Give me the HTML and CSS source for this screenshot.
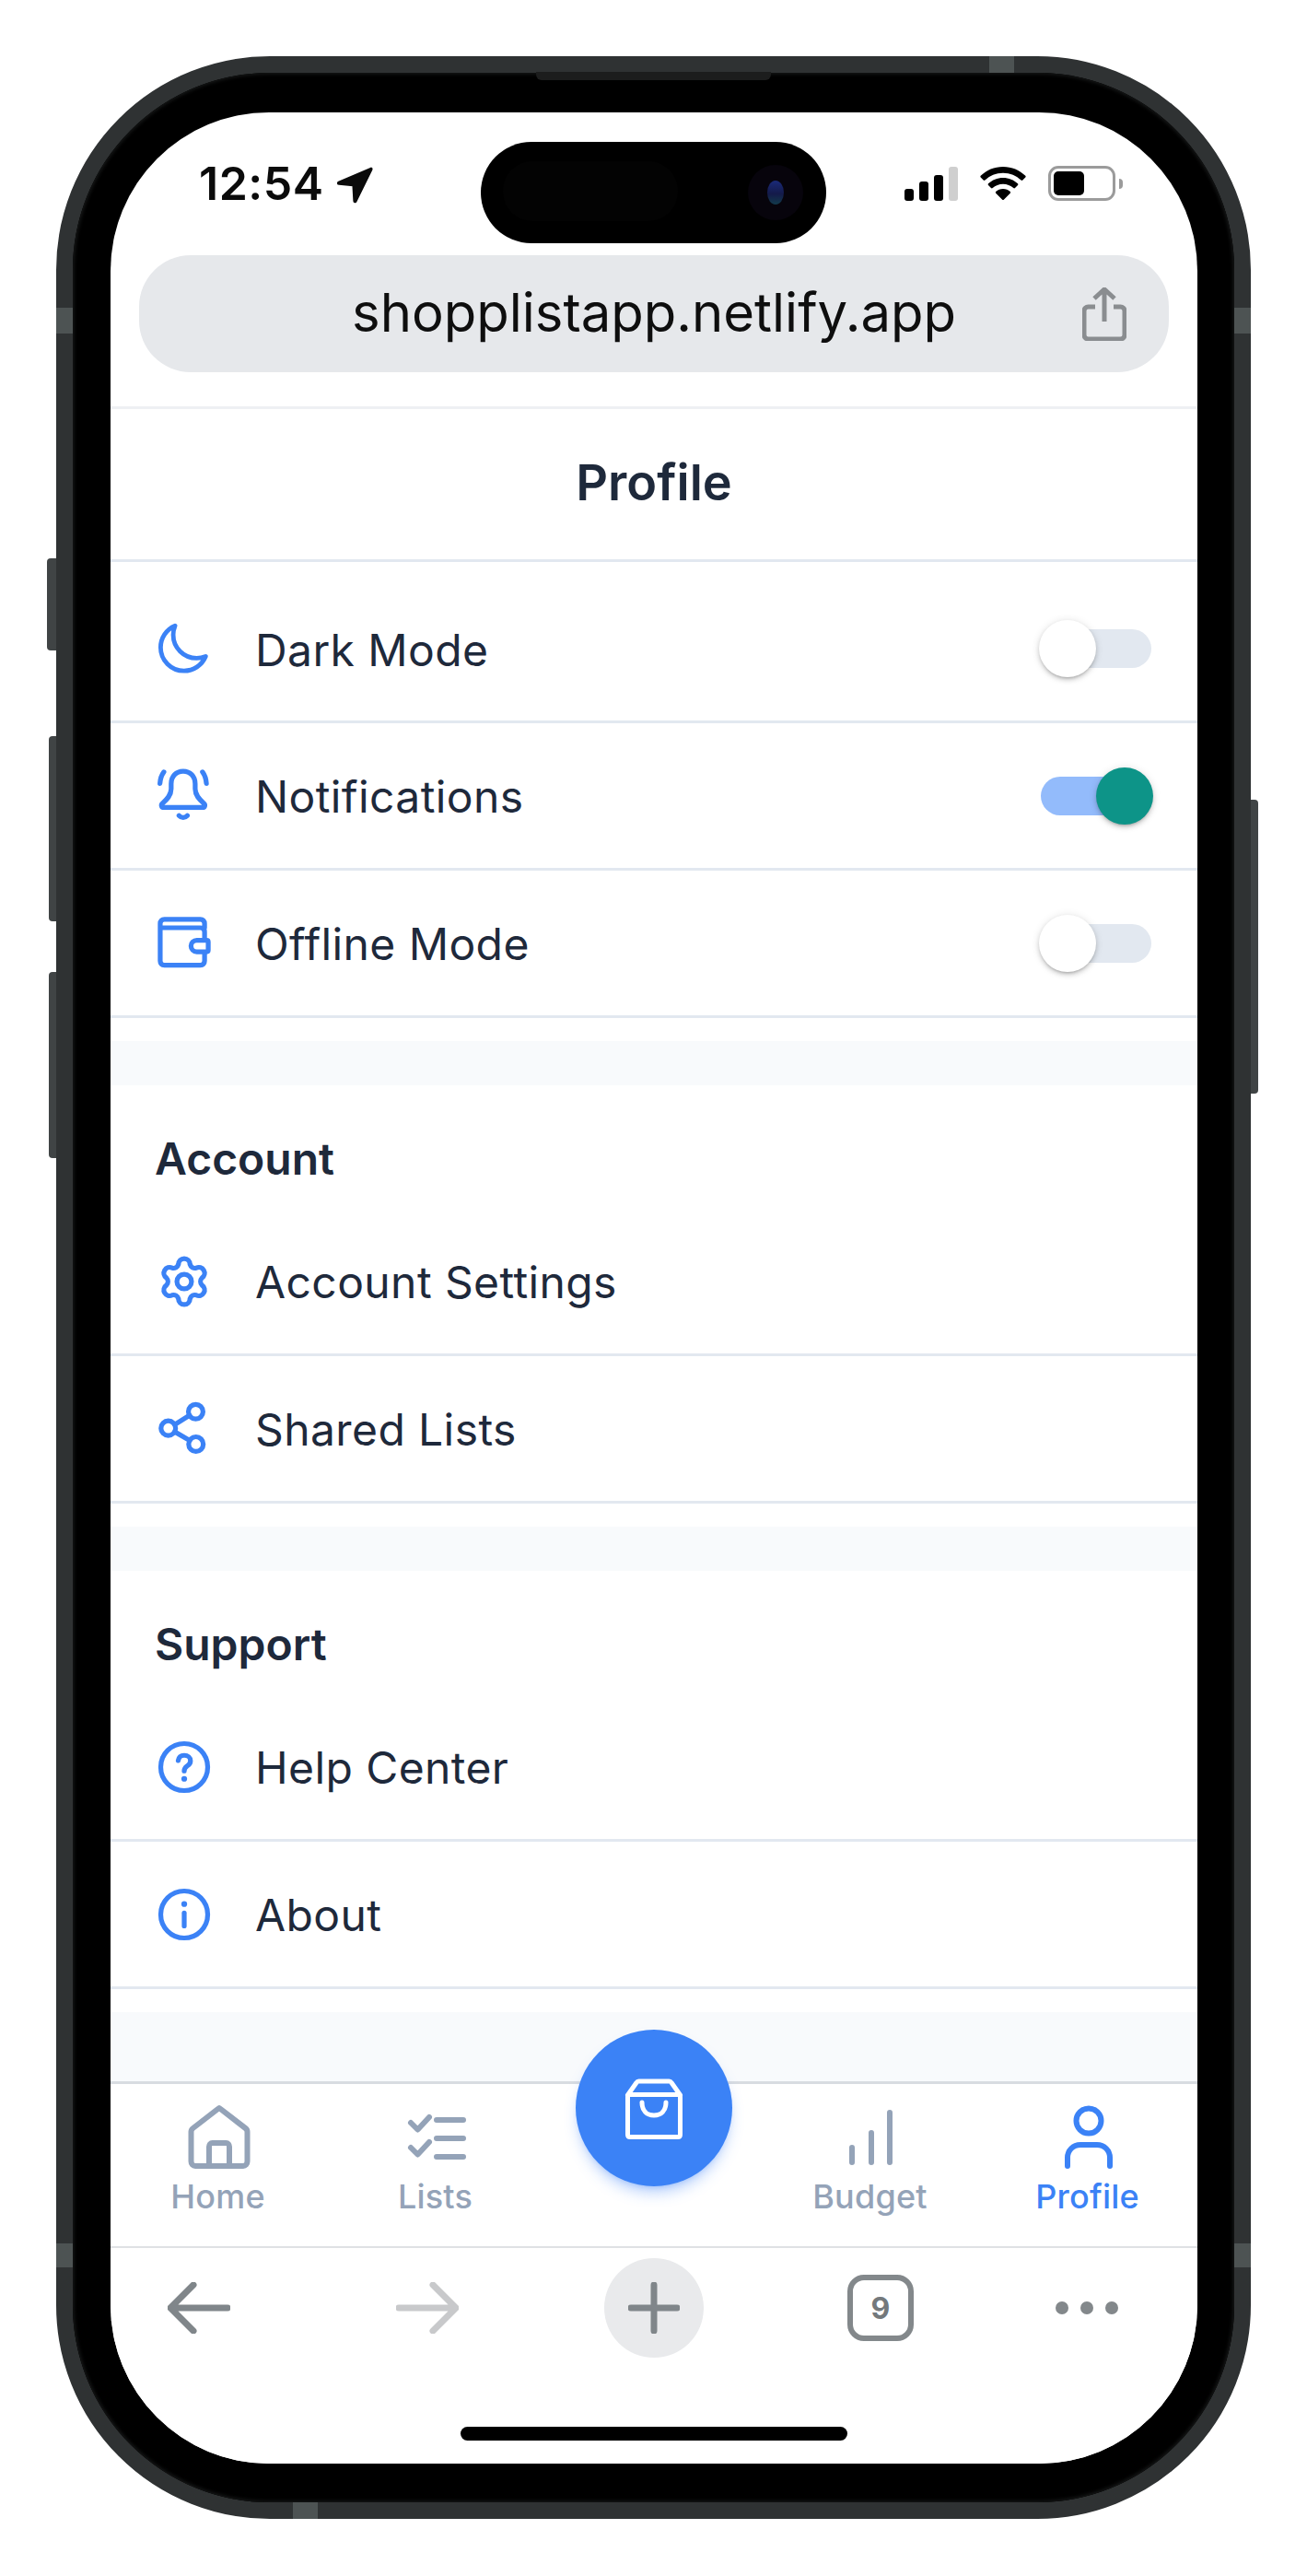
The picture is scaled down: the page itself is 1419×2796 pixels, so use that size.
FILE: index.html
```html
<!DOCTYPE html>
<html lang="en">
<head>
<meta charset="UTF-8">
<meta name="viewport" content="width=device-width, initial-scale=1.0">
<title>Profile</title>
<link rel="stylesheet" href="styles.css">
</head>
<body>
<div class="phone">
    <!-- side buttons and antenna bands -->
    <span class="btn btn-mute"></span>
    <span class="btn btn-up"></span>
    <span class="btn btn-down"></span>
    <span class="btn btn-power"></span>
    <span class="band band-lt"></span>
    <span class="band band-rt"></span>
    <span class="band band-lb"></span>
    <span class="band band-rb"></span>
    <span class="band band-top"></span>
    <span class="band band-bottom"></span>
    <span class="speaker"></span>

    <div class="bezel">
        <div class="screen">
            <div class="status-bar">
                <div class="time-group">
                    <span class="time">12:54</span>
                    <svg class="loc" viewBox="0 0 38 38"><path d="M36 1.500 2.500 15.600c-1.500.7-1.100 2.400.5 2.500l14.300 1.300 .9 15.800c.2 1.600 1.900 1.900 2.500.4L36.700 3c.5-1.300-.4-2-.7-1.500Z"/></svg>
                </div>
                <div class="island">
                    <span class="island-inner"></span>
                    <span class="camera"><span class="lens"></span></span>
                </div>
                <div class="status-icons">
                    <div class="signal">
                        <span class="bar bar1"></span>
                        <span class="bar bar2"></span>
                        <span class="bar bar3"></span>
                        <span class="bar bar4"></span>
                    </div>
                    <svg class="wifi" viewBox="0 0 50 36"><path d="M25 0C15.500 0 7 3.700.7 9.800c-.5.500-.5 1.200 0 1.700l3 3.100c.5.500 1.200.500 1.700 0C10.500 9.700 17.400 6.700 25 6.700s14.500 3 19.600 7.900c.5.500 1.200.500 1.700 0l3-3.100c.5-.5.5-1.200 0-1.700C43 3.700 34.500 0 25 0Z"/><path d="M25 12c-6.200 0-11.800 2.400-16 6.300-.5.500-.5 1.200 0 1.700l3 3.100c.5.500 1.200.500 1.700 0C16.700 20.300 20.700 18.700 25 18.700s8.300 1.600 11.300 4.400c.5.500 1.200.500 1.700 0l3-3.100c.5-.5.5-1.200 0-1.700C36.800 14.400 31.200 12 25 12Z"/><path d="M25 24c-3 0-5.700 1.100-7.800 3-.5.500-.5 1.200 0 1.700l7 7c.4.400 1.200.400 1.600 0l7-7c.5-.5.5-1.200 0-1.700C30.700 25.100 28 24 25 24Z"/></svg>
                    <div class="battery"><span class="battery-fill"></span></div>
                    <span class="battery-nub"></span>
                </div>
            </div>

            <div class="url-bar">
                <span class="url">shopplistapp.netlify.app</span>
                <svg class="url-share" viewBox="0 0 48 58"><path d="M14 21H6.500A4.500 4.500 0 0 0 2 25.500v26A4.500 4.500 0 0 0 6.500 56h35a4.500 4.500 0 0 0 4.500-4.500v-26a4.500 4.500 0 0 0-4.500-4.500H34"/><path d="M24 37V3M13 12 24 2l11 10"/></svg>
            </div>

            <div class="page">
                <div class="page-title">Profile</div>

                <div class="row row-first">
                    <svg class="icon" viewBox="0 0 24 24"><path transform="translate(.2 1.200) scale(.92)" d="M21.752 15.002A9.720 9.720 0 0 1 18 15.750c-5.385 0-9.750-4.365-9.750-9.750 0-1.330.266-2.597.748-3.752A9.753 9.753 0 0 0 3 11.250C3 16.635 7.365 21 12.750 21a9.753 9.753 0 0 0 9.002-5.998Z"/></svg>
                    <span class="row-label">Dark Mode</span>
                    <div class="toggle"><span class="knob"></span></div>
                </div>
                <div class="row">
                    <svg class="icon" viewBox="0 0 24 24"><path d="M11.600 2.500c-2.700 0-4.600 2-4.600 4.800v2c0 2.400-1.600 4-3.400 5.600-.6.600-.3 1.500.6 1.500h14.800c.9 0 1.200-.9.6-1.500-1.800-1.600-3.400-3.200-3.400-5.600v-2c0-2.800-1.900-4.800-4.600-4.800Z"/><path d="M10 19.500c.9 1 2.300 1 3.200 0M4.200 2.800c-.9 1.200-1.400 2.800-1.500 4.400M19 2.800c.9 1.200 1.400 2.800 1.500 4.400"/></svg>
                    <span class="row-label">Notifications</span>
                    <div class="toggle toggle-on"><span class="knob"></span></div>
                </div>
                <div class="row">
                    <svg class="icon" viewBox="0 0 24 24"><path d="M19.800 10.400V7.600c0-1-.6-1.600-1.600-1.600H2.800m17 9.800v2.900c0 1-.6 1.600-1.600 1.600H4.400c-1 0-1.600-.6-1.600-1.600V4.400c0-1 .6-1.600 1.600-1.600h13.800c1 0 1.600.6 1.600 1.600V6"/><path d="M16.800 10.800h3.800c.4 0 .6.200.6.600v3.200c0 .4-.2.600-.6.600h-3.800a2.200 2.200 0 0 1 0-4.400Z"/></svg>
                    <span class="row-label">Offline Mode</span>
                    <div class="toggle"><span class="knob"></span></div>
                </div>

                <div class="gap"></div>
                <div class="section-title">Account</div>
                <div class="row">
                    <svg class="icon" viewBox="0 0 24 24"><path d="M9.800 5.400A2.200 2.200 0 0 1 14.200 5.400A2 2 0 0 0 16.620 6.800A2.200 2.200 0 0 1 18.820 10.600A2 2 0 0 0 18.820 13.400A2.200 2.200 0 0 1 16.620 17.200A2 2 0 0 0 14.200 18.600A2.200 2.200 0 0 1 9.800 18.600A2 2 0 0 0 7.380 17.200A2.200 2.200 0 0 1 5.180 13.400A2 2 0 0 0 5.180 10.600A2.200 2.200 0 0 1 7.380 6.800A2 2 0 0 0 9.800 5.400Z"/><circle cx="12" cy="12" r="2.800"/></svg>
                    <span class="row-label">Account Settings</span>
                </div>
                <div class="row">
                    <svg class="icon" viewBox="0 0 24 24"><circle cx="16.400" cy="5.400" r="2.800"/><circle cx="5.900" cy="11.700" r="2.800"/><circle cx="16.500" cy="17.800" r="2.800"/><path d="m8.400 10.300 5.600-3.500M8.400 13.100l5.700 3.300"/></svg>
                    <span class="row-label">Shared Lists</span>
                </div>

                <div class="gap"></div>
                <div class="section-title">Support</div>
                <div class="row">
                    <svg class="icon" viewBox="0 0 24 24"><circle cx="12" cy="12" r="9"/><path d="M9.700 9.500c.2-1.300 1.100-2 2.300-2 1.400 0 2.400.9 2.400 2.100 0 1-.5 1.500-1.300 2-.7.5-1.100 1-1.100 1.900"/><path class="dot" d="M12 16.500h.01"/></svg>
                    <span class="row-label">Help Center</span>
                </div>
                <div class="row">
                    <svg class="icon" viewBox="0 0 24 24"><circle cx="12" cy="12" r="9"/><path d="M12 11.400v5"/><path class="dot" d="M12 8h.01"/></svg>
                    <span class="row-label">About</span>
                </div>
                <div class="gap gap-last"></div>
            </div>

            <div class="tab-bar">
                <div class="tab">
                    <svg class="tab-icon" viewBox="0 0 72 72"><path d="M36 4 7.500 26c-1.300 1-2 2.300-2 3.800V62c0 2.800 2 5 4.500 5h52c2.500 0 4.500-2.200 4.500-5V29.800c0-1.500-.7-2.800-2-3.800L36 4Z"/><path d="M25 66V46c0-2.200 1.500-4 3.500-4h15c2 0 3.500 1.800 3.500 4v20"/></svg>
                    <span class="tab-label">Home</span>
                </div>
                <div class="tab">
                    <svg class="tab-icon" viewBox="0 0 72 72"><path d="m8 20 7.500 7.500L28 14M8 47l7.500 7.500L28 41M36 17h29M36 37h29M36 57h29"/></svg>
                    <span class="tab-label">Lists</span>
                </div>
                <div class="tab"></div>
                <div class="tab">
                    <svg class="tab-icon" viewBox="0 0 72 72"><path d="M15 47v16M36 31v32M56 9v54"/></svg>
                    <span class="tab-label">Budget</span>
                </div>
                <div class="tab tab-active">
                    <svg class="tab-icon" viewBox="0 0 72 72"><circle cx="36" cy="18" r="13.500"/><path d="M13 67V58c0-8 6-14 14-14h18c8 0 14 6 14 14v9"/></svg>
                    <span class="tab-label">Profile</span>
                </div>
                <div class="fab">
                    <svg class="fab-icon" viewBox="0 0 72 72"><path d="M7.500 22 17 8.500c.6-1 1.500-1.500 2.500-1.500h33c1 0 1.900.5 2.500 1.500L64.500 22"/><path d="M7.500 24c0-1.500 1-2.500 2.500-2.500h52c1.500 0 2.500 1 2.500 2.500v41c0 1.500-1 2.500-2.500 2.500H10c-1.500 0-2.500-1-2.500-2.500V24Z"/><path d="M23 30c0 9 5 14 13 14s13-5 13-14"/></svg>
                </div>
            </div>

            <div class="browser-bar">
                <div class="browser-row">
                    <svg class="arrow" viewBox="0 0 68 56"><path d="M65 28H5M28 3 3 28l25 25"/></svg>
                    <svg class="arrow arrow-off" viewBox="0 0 68 56"><path d="M3 28h60M40 3l25 25-25 25"/></svg>
                    <div class="plus"><svg viewBox="0 0 56 56"><path d="M28 3v50M3 28h50"/></svg></div>
                    <div class="tabs-count">9</div>
                    <div class="dots"><span></span><span></span><span></span></div>
                </div>
                <div class="home-indicator"></div>
            </div>
        </div>
    </div>
</div>
</body>
</html>
```

FILE: styles.css
```css
*{
    box-sizing: border-box;
}
html, body{
    margin: 0;
    padding: 0;
    background: #fff;
    font-family: "Inter", "Liberation Sans", sans-serif;
}
body{
    width: 1419px;
    height: 2796px;
    padding-top: 61px;
    padding-left: 61px;
    overflow: hidden;
}

/* phone frame */
.phone{
    position: relative;
    width: 1297px;
    height: 2673px;
    border: 18px solid #2f3233;
    border-radius: 232px;
    background: #000;
}
.bezel{
    height: 100%;
    padding: 43px 40px 42px 41px;
    background: #000;
    border-radius: 214px;
    box-shadow: inset 0 0 4px 1px #1b1d1d;
}
.screen{
    position: relative;
    display: flex;
    flex-direction: column;
    width: 1180px;
    height: 2552px;
    background: #fff;
    border-radius: 172px;
    overflow: hidden;
}

.btn{
    position: absolute;
    background: #404445;
    border-radius: 4px 0 0 4px;
}
.btn-mute{ left: -28px; top: 527px; width: 10px; height: 100px; }
.btn-up{ left: -26px; top: 720px; width: 8px; height: 201px; }
.btn-down{ left: -26px; top: 976px; width: 8px; height: 202px; }
.btn-power{ right: -26px; top: 789px; width: 8px; height: 319px; border-radius: 0 4px 4px 0; }

.band{
    position: absolute;
    background: #4d5353;
}
.band-lt{ left: -18px; top: 255px; width: 18px; height: 28px; }
.band-rt{ right: -18px; top: 255px; width: 18px; height: 28px; }
.band-lb{ left: -18px; top: 2356px; width: 18px; height: 26px; }
.band-rb{ right: -18px; top: 2356px; width: 18px; height: 26px; }
.band-top{ left: 995px; top: -18px; width: 27px; height: 18px; }
.band-bottom{ left: 239px; bottom: -18px; width: 27px; height: 18px; }
.speaker{
    position: absolute;
    left: 503px;
    top: -1px;
    width: 255px;
    height: 9px;
    background: #1c1d1d;
    border-radius: 0 0 6px 6px;
}

/* status bar */
.status-bar{
    display: flex;
    height: 155px;
    flex-shrink: 0;
}
.time-group{
    display: flex;
    align-items: flex-start;
    width: 402px;
    padding-left: 96px;
    padding-top: 52px;
}
.time{
    font-size: 50px;
    font-weight: 600;
    line-height: 50px;
    letter-spacing: .5px;
    color: #0b0b0b;
}
.loc{
    width: 40px;
    height: 40px;
    margin-left: 14px;
    margin-top: 7px;
    fill: #0b0b0b;
    stroke: #0b0b0b;
    stroke-width: 1.500;
    stroke-linejoin: round;
}
.island{
    position: relative;
    width: 375px;
    height: 110px;
    margin-top: 32px;
    background: #000;
    border-radius: 55px;
}
.island-inner{
    position: absolute;
    left: 24px;
    top: 21px;
    width: 190px;
    height: 65px;
    background: #030303;
    border-radius: 32px;
}
.camera{
    position: absolute;
    left: 290px;
    top: 25px;
    width: 60px;
    height: 60px;
    background: #07040c;
    border-radius: 50%;
}
.lens{
    position: absolute;
    left: 21px;
    top: 17px;
    width: 18px;
    height: 26px;
    border-radius: 50%;
    background: linear-gradient(#1a2a78, #141a4a 55%, #123a4a);
}
.status-icons{
    display: flex;
    align-items: flex-start;
    margin-left: 85px;
    padding-top: 59px;
}
.signal{
    display: flex;
    align-items: flex-end;
    gap: 6px;
    width: 60px;
    height: 37px;
}
.bar{
    width: 10px;
    background: #000;
    border-radius: 3px;
}
.bar1{ height: 13px; }
.bar2{ height: 21px; }
.bar3{ height: 28px; }
.bar4{ height: 37px; background: #cfcfcf; }
.wifi{
    width: 50px;
    height: 36px;
    margin-left: 22px;
    fill: #000;
}
.battery{
    width: 73px;
    height: 38px;
    margin-left: 24px;
    margin-top: -1px;
    padding: 3px;
    border: 3px solid #9b9b9b;
    border-radius: 11px;
}
.battery-fill{
    display: block;
    width: 33px;
    height: 100%;
    background: #000;
    border-radius: 5px;
}
.battery-nub{
    width: 4px;
    height: 11px;
    margin-left: 4px;
    margin-top: 13px;
    background: #9b9b9b;
    border-radius: 0 4px 4px 0;
}

/* url bar */
.url-bar{
    position: relative;
    display: flex;
    align-items: center;
    justify-content: center;
    flex-shrink: 0;
    height: 127px;
    margin: 0 31px;
    background: #e6e8eb;
    border-radius: 56px;
}
.url{
    font-size: 58px;
    color: #0e0e0e;
    line-height: 70px;
    margin-top: -4px;
}
.url-share{
    position: absolute;
    right: 46px;
    top: 35px;
    width: 48px;
    height: 58px;
    fill: none;
    stroke: #8a8d90;
    stroke-width: 5;
}

/* page */
.page{
    flex: 1;
    margin-top: 37px;
    border-top: 3px solid #eef0f3;
    overflow: hidden;
}
.page-title{
    height: 166px;
    line-height: 160px;
    text-align: center;
    font-size: 54px;
    font-weight: 600;
    color: #1e293b;
    border-bottom: 3px solid #e2e8f0;
}
.row{
    display: flex;
    align-items: center;
    height: 160px;
    padding: 0 48px 0 46px;
    border-bottom: 3px solid #e2e8f0;
}
.row-first{
    height: 175px;
    padding-top: 16px;
}
.icon{
    flex-shrink: 0;
    width: 68px;
    height: 68px;
    fill: none;
    stroke: #3b82f6;
    stroke-width: 1.850;
    stroke-linecap: round;
    stroke-linejoin: round;
}
.icon .dot{
    stroke-width: 2.200;
}
.row-label{
    flex: 1;
    margin-left: 43px;
    margin-top: 2px;
    font-size: 48px;
    letter-spacing: .4px;
    color: #1e293b;
}
.toggle{
    position: relative;
    width: 120px;
    height: 42px;
    margin-right: 2px;
    background: #e2e8f0;
    border-radius: 21px;
}
.knob{
    position: absolute;
    left: -2px;
    top: -10px;
    width: 62px;
    height: 62px;
    background: #fff;
    border-radius: 50%;
    box-shadow: 0 3px 3px -2px rgba(0,0,0,.2), 0 3px 5px rgba(0,0,0,.14), 0 1px 10px rgba(0,0,0,.12);
}
.toggle-on{
    background: #93bbfb;
}
.toggle-on .knob{
    left: 60px;
    background: #0d9488;
}
.gap{
    height: 48px;
    margin-top: 25px;
    background: #f8fafc;
}
.gap-last{
    height: 90px;
}
.section-title{
    height: 134px;
    padding: 44px 48px 0;
    font-size: 48px;
    line-height: 72px;
    font-weight: 600;
    color: #1e293b;
}

/* bottom tabs */
.tab-bar{
    position: relative;
    display: flex;
    flex-shrink: 0;
    height: 179px;
    background: #fff;
    border-top: 3px solid #d8dce1;
}
.tab{
    flex: 1;
    display: flex;
    flex-direction: column;
    align-items: center;
    padding-top: 22px;
    color: #94a3b8;
}
.tab-active{
    color: #3b82f6;
}
.tab-icon{
    width: 72px;
    height: 72px;
    fill: none;
    stroke: currentColor;
    stroke-width: 6;
    stroke-linecap: round;
    stroke-linejoin: round;
}
.tab-label{
    margin-top: 6px;
    margin-right: 3px;
    font-size: 36px;
    line-height: 44px;
    font-weight: 500;
    letter-spacing: .2px;
}
.fab{
    position: absolute;
    left: 505px;
    top: -59px;
    display: flex;
    align-items: center;
    justify-content: center;
    width: 170px;
    height: 170px;
    background: #3b82f6;
    border-radius: 50%;
    box-shadow: 0 10px 15px -3px rgba(59,130,246,.35), 0 4px 6px -4px rgba(59,130,246,.35);
}
.fab-icon{
    width: 72px;
    height: 72px;
    fill: none;
    stroke: #fff;
    stroke-width: 5;
    stroke-linecap: round;
    stroke-linejoin: round;
}

/* safari toolbar */
.browser-bar{
    position: relative;
    flex-shrink: 0;
    height: 236px;
    background: #fff;
    border-top: 2px solid #dfe1e4;
}
.browser-row{
    display: flex;
    align-items: center;
    height: 130px;
    padding-left: 62px;
}
.arrow{
    width: 68px;
    height: 56px;
    fill: none;
    stroke: #80868a;
    stroke-width: 7;
    stroke-linecap: round;
    stroke-linejoin: round;
}
.arrow-off{
    margin-left: 180px;
    stroke: #c8c9cb;
}
.plus{
    display: flex;
    align-items: center;
    justify-content: center;
    width: 108px;
    height: 108px;
    margin-left: 158px;
    background: #e9eaec;
    border-radius: 50%;
}
.plus svg{
    width: 56px;
    height: 56px;
    fill: none;
    stroke: #80868a;
    stroke-width: 7;
    stroke-linecap: round;
}
.tabs-count{
    display: flex;
    align-items: center;
    justify-content: center;
    width: 72px;
    height: 72px;
    margin-left: 156px;
    border: 6px solid #83888b;
    border-radius: 18px;
    font-size: 32px;
    font-weight: 700;
    color: #74797c;
}
.dots{
    display: flex;
    gap: 13px;
    margin-left: 154px;
}
.dots span{
    width: 14px;
    height: 14px;
    background: #83888b;
    border-radius: 50%;
}
.home-indicator{
    position: absolute;
    left: 380px;
    bottom: 25px;
    width: 420px;
    height: 15px;
    background: #000;
    border-radius: 8px;
}
```
